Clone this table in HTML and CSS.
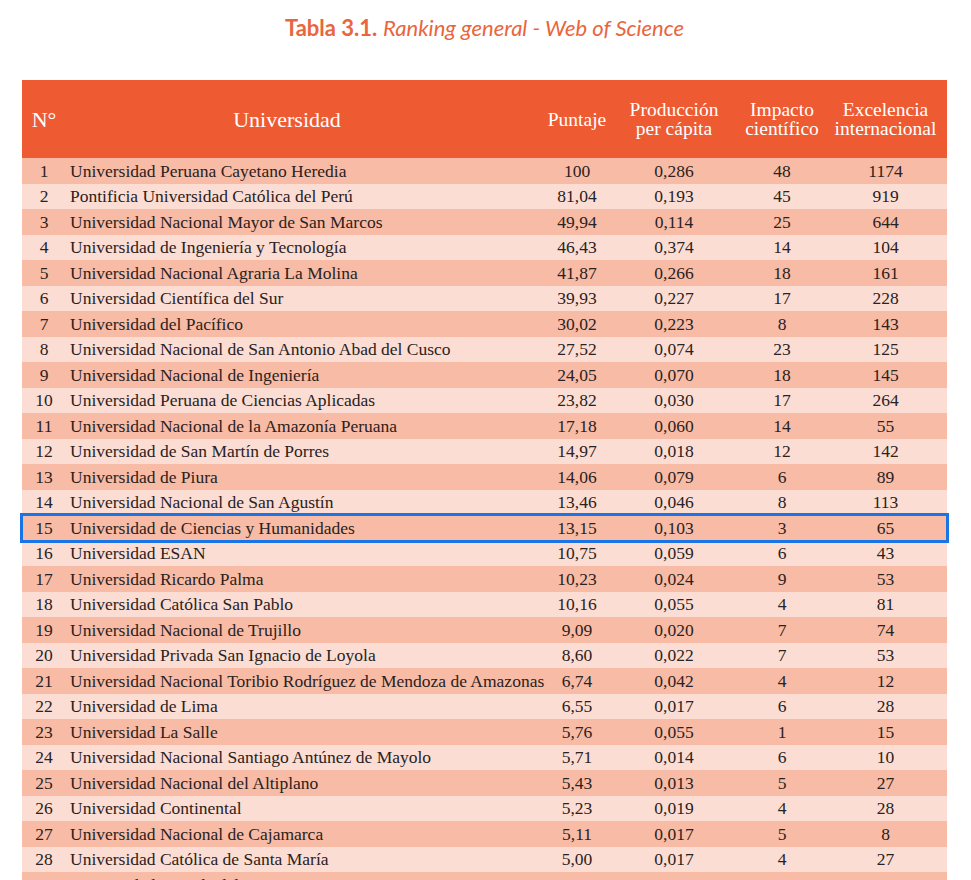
FILE: index.html
```html
<!DOCTYPE html>
<html lang="es">
<head>
<meta charset="utf-8">
<title>Tabla 3.1. Ranking general - Web of Science</title>
<link rel="stylesheet" href="styles.css">
</head>
<body>
<div class="page">
  <h1 class="title"><b>Tabla 3.1.</b> <i>Ranking general - Web of Science</i></h1>
  <table class="ranking">
    <colgroup>
      <col class="c-n"><col class="c-u"><col class="c-p"><col class="c-pc"><col class="c-i"><col class="c-e">
    </colgroup>
    <thead>
      <tr>
        <th class="h-n">N°</th>
        <th class="h-u">Universidad</th>
        <th>Puntaje</th>
        <th>Producción<br>per cápita</th>
        <th>Impacto<br>científico</th>
        <th>Excelencia<br>internacional</th>
      </tr>
    </thead>
    <tbody>
      <tr><td>1</td><td class="u">Universidad Peruana Cayetano Heredia</td><td>100</td><td>0,286</td><td>48</td><td>1174</td></tr>
      <tr><td>2</td><td class="u">Pontificia Universidad Católica del Perú</td><td>81,04</td><td>0,193</td><td>45</td><td>919</td></tr>
      <tr><td>3</td><td class="u">Universidad Nacional Mayor de San Marcos</td><td>49,94</td><td>0,114</td><td>25</td><td>644</td></tr>
      <tr><td>4</td><td class="u">Universidad de Ingeniería y Tecnología</td><td>46,43</td><td>0,374</td><td>14</td><td>104</td></tr>
      <tr><td>5</td><td class="u">Universidad Nacional Agraria La Molina</td><td>41,87</td><td>0,266</td><td>18</td><td>161</td></tr>
      <tr><td>6</td><td class="u">Universidad Científica del Sur</td><td>39,93</td><td>0,227</td><td>17</td><td>228</td></tr>
      <tr><td>7</td><td class="u">Universidad del Pacífico</td><td>30,02</td><td>0,223</td><td>8</td><td>143</td></tr>
      <tr><td>8</td><td class="u">Universidad Nacional de San Antonio Abad del Cusco</td><td>27,52</td><td>0,074</td><td>23</td><td>125</td></tr>
      <tr><td>9</td><td class="u">Universidad Nacional de Ingeniería</td><td>24,05</td><td>0,070</td><td>18</td><td>145</td></tr>
      <tr><td>10</td><td class="u">Universidad Peruana de Ciencias Aplicadas</td><td>23,82</td><td>0,030</td><td>17</td><td>264</td></tr>
      <tr><td>11</td><td class="u">Universidad Nacional de la Amazonía Peruana</td><td>17,18</td><td>0,060</td><td>14</td><td>55</td></tr>
      <tr><td>12</td><td class="u">Universidad de San Martín de Porres</td><td>14,97</td><td>0,018</td><td>12</td><td>142</td></tr>
      <tr><td>13</td><td class="u">Universidad de Piura</td><td>14,06</td><td>0,079</td><td>6</td><td>89</td></tr>
      <tr><td>14</td><td class="u">Universidad Nacional de San Agustín</td><td>13,46</td><td>0,046</td><td>8</td><td>113</td></tr>
      <tr class="highlight"><td>15</td><td class="u">Universidad de Ciencias y Humanidades</td><td>13,15</td><td>0,103</td><td>3</td><td>65</td></tr>
      <tr><td>16</td><td class="u">Universidad ESAN</td><td>10,75</td><td>0,059</td><td>6</td><td>43</td></tr>
      <tr><td>17</td><td class="u">Universidad Ricardo Palma</td><td>10,23</td><td>0,024</td><td>9</td><td>53</td></tr>
      <tr><td>18</td><td class="u">Universidad Católica San Pablo</td><td>10,16</td><td>0,055</td><td>4</td><td>81</td></tr>
      <tr><td>19</td><td class="u">Universidad Nacional de Trujillo</td><td>9,09</td><td>0,020</td><td>7</td><td>74</td></tr>
      <tr><td>20</td><td class="u">Universidad Privada San Ignacio de Loyola</td><td>8,60</td><td>0,022</td><td>7</td><td>53</td></tr>
      <tr><td>21</td><td class="u">Universidad Nacional Toribio Rodríguez de Mendoza de Amazonas</td><td>6,74</td><td>0,042</td><td>4</td><td>12</td></tr>
      <tr><td>22</td><td class="u">Universidad de Lima</td><td>6,55</td><td>0,017</td><td>6</td><td>28</td></tr>
      <tr><td>23</td><td class="u">Universidad La Salle</td><td>5,76</td><td>0,055</td><td>1</td><td>15</td></tr>
      <tr><td>24</td><td class="u">Universidad Nacional Santiago Antúnez de Mayolo</td><td>5,71</td><td>0,014</td><td>6</td><td>10</td></tr>
      <tr><td>25</td><td class="u">Universidad Nacional del Altiplano</td><td>5,43</td><td>0,013</td><td>5</td><td>27</td></tr>
      <tr><td>26</td><td class="u">Universidad Continental</td><td>5,23</td><td>0,019</td><td>4</td><td>28</td></tr>
      <tr><td>27</td><td class="u">Universidad Nacional de Cajamarca</td><td>5,11</td><td>0,017</td><td>5</td><td>8</td></tr>
      <tr><td>28</td><td class="u">Universidad Católica de Santa María</td><td>5,00</td><td>0,017</td><td>4</td><td>27</td></tr>
      <tr><td>29</td><td class="u">Universidad Privada del Norte</td><td>4,77</td><td>0,007</td><td>4</td><td>27</td></tr>
    </tbody>
  </table>
</div>
</body>
</html>
```

FILE: styles.css
```css
html, body {
  margin: 0;
  padding: 0;
  background: #ffffff;
}

.page {
  padding: 15px 24px 0 22px;
  width: 925px;
}

.title {
  margin: 0 0 40px 0;
  text-align: center;
  font-family: Lato, "Open Sans", sans-serif;
  font-size: 22px;
  line-height: 25px;
  font-weight: normal;
  color: #e9653d;
}

.title b {
  font-weight: 700;
}

.title i {
  font-style: italic;
}

.ranking {
  width: 925px;
  border-collapse: collapse;
  table-layout: fixed;
  font-family: "Liberation Serif", "Times New Roman", serif;
  color: #2a2220;
}

.c-n { width: 44px; }
.c-u { width: 480px; }
.c-p { width: 62px; }
.c-pc { width: 132px; }
.c-i { width: 84px; }
.c-e { width: 123px; }

.ranking thead tr {
  background: #ee5a32;
  height: 78px;
}

.ranking th {
  font-family: "Liberation Serif", "Times New Roman", serif;
  color: #ffffff;
  font-weight: normal;
  font-size: 19.5px;
  line-height: 19px;
  text-align: center;
  padding: 0;
  white-space: nowrap;
}

.ranking th.h-n,
.ranking th.h-u {
  font-size: 22px;
}

.ranking th.h-u {
  padding-right: 38px;
}

.ranking td {
  font-family: "Liberation Serif", "Times New Roman", serif;
  height: 25.5px;
  padding: 0;
  font-size: 17.5px;
  line-height: 20px;
  text-align: center;
  white-space: nowrap;
  overflow: visible;
  vertical-align: middle;
}

.ranking td.u {
  text-align: left;
  padding-left: 4px;
}

.ranking tbody tr:nth-child(odd) {
  background: #f8bba6;
}

.ranking tbody tr:nth-child(even) {
  background: #fcddd4;
}

.ranking tr.highlight {
  outline: 3px solid #1a74e6;
  outline-offset: -1px;
}
```
